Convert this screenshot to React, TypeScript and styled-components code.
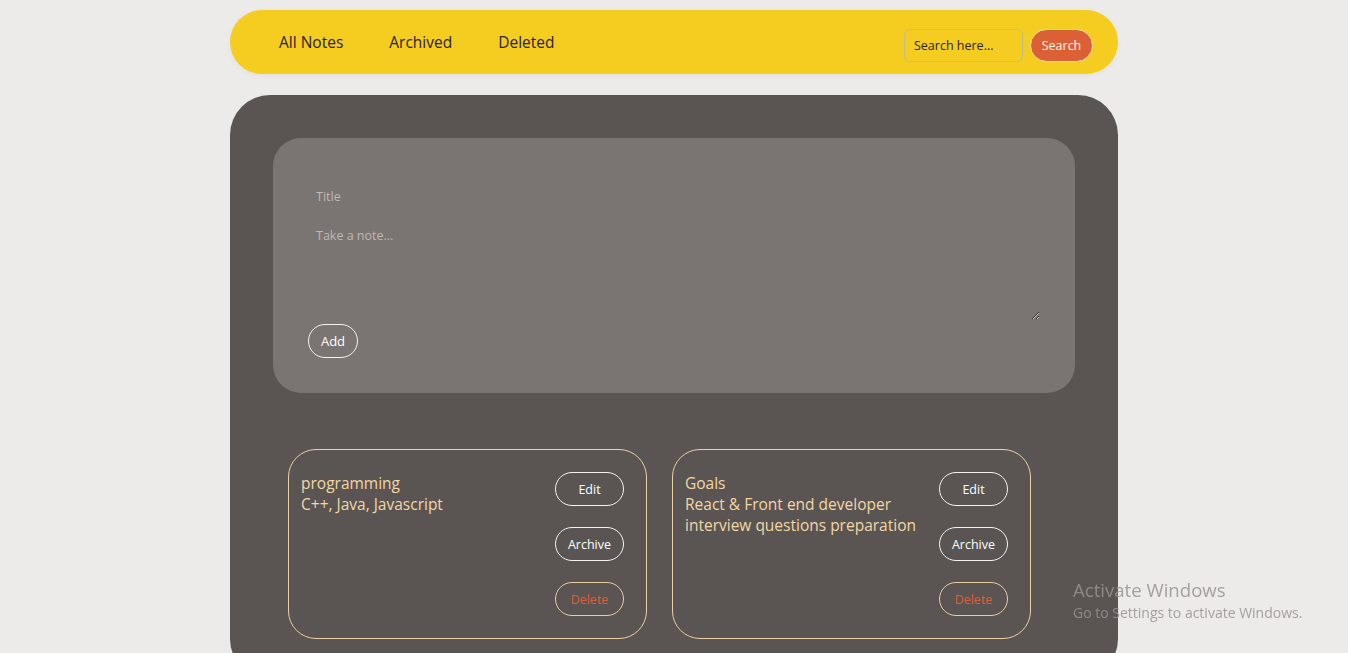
import React from 'react'
import { styled, createGlobalStyle } from 'styled-components'

type Note = {
  title: string,
  body: string
}

const notes: Note[] = [
  { title: 'programming', body: 'C++, Java, Javascript' },
  { title: 'Goals', body: 'React & Front end developer interview questions preparation' },
]

const GlobalStyle = createGlobalStyle`
html, body {
  margin: 0;
  padding: 0;
  background-color: #ecebe9;
  font-family: "Open Sans", "Noto Sans", sans-serif;
  overflow: hidden;
}
`

const Page = styled.div`
display: flex;
flex-direction: column;
align-items: center;
padding-top: 10px;
gap: 21px;
min-height: 653px;
box-sizing: border-box;
`

const Header = styled.header`
width: 888px;
height: 64px;
box-sizing: border-box;
background-color: #f5cd20;
border-radius: 32px;
display: flex;
align-items: center;
justify-content: space-between;
padding: 0 25px 0 49px;
box-shadow: 0 2px 6px rgba(0, 0, 0, 0.04);
`

const Nav = styled.nav`
display: flex;
gap: 46px;
`

const NavLink = styled.a`
font-size: 15.5px;
color: #2b2515;
text-decoration: none;
cursor: pointer;
`

const SearchBox = styled.div`
display: flex;
align-items: center;
gap: 7px;
margin-top: 7px;
`

const SearchInput = styled.input`
width: 119px;
height: 33px;
box-sizing: border-box;
background: transparent;
border: 1px solid #c2bd8a;
border-radius: 6px;
padding: 0 9px;
font-family: inherit;
font-size: 12.5px;
color: #2b2515;
outline: none;
&::placeholder {
  color: #2b2515;
}
`

const SearchButton = styled.button`
width: 63px;
height: 33px;
box-sizing: border-box;
background-color: #dc6035;
border: 1px solid #f3dfae;
border-radius: 17px;
color: #fff6ea;
font-family: inherit;
font-size: 12.5px;
cursor: pointer;
`

const Main = styled.main`
width: 888px;
box-sizing: border-box;
background-color: #5a5553;
border-radius: 40px;
padding: 43px 43px 40px;
flex: 1;
`

const Composer = styled.form`
background-color: #7a7573;
border-radius: 28px;
padding: 43px 35px 35px;
display: flex;
flex-direction: column;
align-items: flex-start;
`

const TitleInput = styled.input`
width: 100%;
height: 30px;
box-sizing: border-box;
background: transparent;
border: none;
outline: none;
padding: 0 8px;
font-family: inherit;
font-size: 12.5px;
color: #f0ece8;
&::placeholder {
  color: #bdb8b5;
}
`

const NoteArea = styled.textarea`
width: 100%;
height: 100px;
margin-top: 9px;
box-sizing: border-box;
background: transparent;
border: none;
outline: none;
padding: 7px 8px 5px;
font-family: inherit;
font-size: 12.5px;
color: #f0ece8;
resize: vertical;
&::placeholder {
  color: #bdb8b5;
}
`

const PillButton = styled.button<{ $danger?: boolean }>`
width: 69px;
height: 34px;
box-sizing: border-box;
background: transparent;
border: 1px solid ${({ $danger }) => ($danger ? '#e6cfa3' : '#f6f2ec')};
border-radius: 17px;
color: ${({ $danger }) => ($danger ? '#dc6035' : '#ffffff')};
font-family: inherit;
font-size: 12.5px;
cursor: pointer;
padding: 0;
`

const AddButton = styled(PillButton)`
width: 50px;
margin-top: 4px;
font-size: 13px;
`

const NotesGrid = styled.section`
display: flex;
gap: 25px;
padding: 56px 15px 0;
`

const NoteCard = styled.article`
width: 359px;
height: 190px;
box-sizing: border-box;
border: 1px solid #ead3a4;
border-radius: 28px;
padding: 22px 22px 22px 12px;
display: flex;
gap: 12px;
`

const NoteText = styled.div`
flex: 1;
color: #f2d7a5;
font-size: 15.5px;
line-height: 21px;
margin-top: 1px;
`

const Actions = styled.div`
display: flex;
flex-direction: column;
gap: 21px;
`

const Watermark = styled.div`
position: fixed;
left: 1073px;
top: 578px;
color: rgba(150, 147, 145, 0.85);
font-family: "Open Sans", "Noto Sans", sans-serif;
pointer-events: none;
`

const WatermarkTitle = styled.div`
font-size: 18.6px;
line-height: 24px;
`

const WatermarkSub = styled.div`
font-size: 14px;
line-height: 22px;
`

export default function App() {
  return (
    <>
      <GlobalStyle />
      <Page>
        <Header>
          <Nav>
            <NavLink>All Notes</NavLink>
            <NavLink>Archived</NavLink>
            <NavLink>Deleted</NavLink>
          </Nav>
          <SearchBox>
            <SearchInput placeholder="Search here..." />
            <SearchButton type="button">Search</SearchButton>
          </SearchBox>
        </Header>
        <Main>
          <Composer onSubmit={(e) => e.preventDefault()}>
            <TitleInput placeholder="Title" />
            <NoteArea placeholder="Take a note..." />
            <AddButton type="submit">Add</AddButton>
          </Composer>
          <NotesGrid>
            {notes.map((note) => (
              <NoteCard key={note.title}>
                <NoteText>
                  <div>{note.title}</div>
                  <div>{note.body}</div>
                </NoteText>
                <Actions>
                  <PillButton>Edit</PillButton>
                  <PillButton>Archive</PillButton>
                  <PillButton $danger>Delete</PillButton>
                </Actions>
              </NoteCard>
            ))}
          </NotesGrid>
        </Main>
      </Page>
      <Watermark>
        <WatermarkTitle>Activate Windows</WatermarkTitle>
        <WatermarkSub>Go to Settings to activate Windows.</WatermarkSub>
      </Watermark>
    </>
  )
}
